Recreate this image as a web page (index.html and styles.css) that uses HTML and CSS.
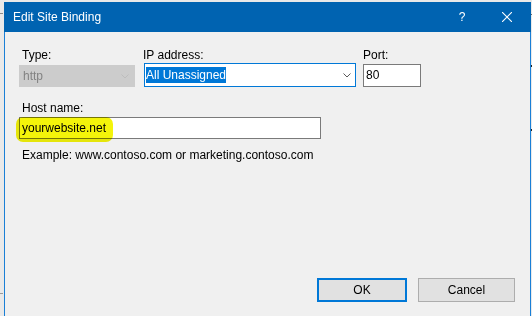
FILE: index.html
```html
<!DOCTYPE html>
<html>
<head>
<meta charset="utf-8">
<link rel="stylesheet" href="styles.css">
</head>
<body>
<div class="screen">
  <div class="edge edge-left">
    <span class="tick tick-a"></span>
    <span class="tick tick-b"></span>
  </div>
  <div class="dialog">
    <div class="titlebar">
      <span class="title">Edit Site Binding</span>
      <span class="help">?</span>
      <svg class="close" width="10" height="10" viewBox="0 0 10 10"><path d="M0 0L10 10M10 0L0 10" stroke="#fff" stroke-width="1.1" fill="none"/></svg>
    </div>
    <div class="content">
      <div class="fields">
        <div class="field field-type">
          <label class="lbl lbl-type">Type:</label>
          <div class="select select-disabled">
            <span>http</span>
            <svg class="chev" width="8" height="5" viewBox="0 0 8 5"><path d="M0.5 0.5L4 4L7.5 0.5" stroke="#bdbdbd" stroke-width="1" fill="none"/></svg>
          </div>
        </div>
        <div class="field field-ip">
          <label class="lbl lbl-ip">IP address:</label>
          <div class="select select-focus">
            <span class="sel-text">All Unassigned</span>
            <svg class="chev" width="8" height="5" viewBox="0 0 8 5"><path d="M0.5 0.5L4 4L7.5 0.5" stroke="#5a5a5a" stroke-width="1" fill="none"/></svg>
          </div>
        </div>
        <div class="field field-port">
          <label class="lbl lbl-port">Port:</label>
          <div class="textbox port-box">80</div>
        </div>
      </div>
      <div class="host">
        <label class="lbl lbl-host">Host name:</label>
        <div class="textbox host-box">
          <span class="host-text">yourwebsite.net</span>
          <span class="marker"></span>
        </div>
      </div>
      <p class="example">Example: www.contoso.com or marketing.contoso.com</p>
      <div class="buttons">
        <button class="btn btn-ok">OK</button>
        <button class="btn btn-cancel">Cancel</button>
      </div>
    </div>
  </div>
  <div class="edge edge-right">
    <span class="tick tick-c"></span>
    <span class="tick tick-d"></span>
    <span class="tick tick-e"></span>
  </div>
</div>
</body>
</html>
```
FILE: styles.css
```css
html, body {
  margin: 0;
  padding: 0;
}
body {
  font-family: "Liberation Sans", Arial, sans-serif;
  font-size: 12px;
  color: #000;
  background: #e9e9e9;
}
.screen {
  display: flex;
  width: 532px;
  height: 316px;
  overflow: hidden;
  background: #e9e9e9;
}
.edge {
  display: flex;
  flex-direction: column;
}
.edge-left {
  width: 4px;
}
.edge-right {
  width: 1px;
}
.tick {
  display: block;
  height: 1px;
  background: #8a8a8a;
}
.tick-a { margin-top: 13px; width: 3px; }
.tick-b { margin-top: 279px; width: 3px; background: #9a9a9a; }
.tick-c { margin-top: 14px; background: #6a6a6a; }
.tick-d { margin-top: 50px; height: 2px; background: #222; }
.tick-e { margin-top: 62px; height: 2px; background: #222; }

.dialog {
  width: 527px;
  margin-top: 2px;
  display: flex;
  flex-direction: column;
  background: #f0f0f0;
}
.titlebar {
  height: 30px;
  line-height: 30px;
  background: #0063b1;
  color: #fff;
  display: flex;
  align-items: center;
}
.title {
  flex: 1;
  padding-left: 9px;
}
.help {
  width: 8px;
  text-align: center;
  margin-right: 36px;
}
.close {
  display: block;
  margin-right: 19px;
}
.content {
  flex: 1;
  border-left: 1px solid #1a7fd6;
  border-right: 1px solid #1a7fd6;
  padding: 16px 15px 14px 14px;
  display: flex;
  flex-direction: column;
}
.fields {
  display: flex;
}
.field {
  display: flex;
  flex-direction: column;
  height: 39px;
}
.field-type { width: 116px; }
.field-ip { width: 212px; margin-left: 9px; }
.field-port { width: 58px; margin-left: 7px; }
.lbl {
  display: block;
  line-height: 15px;
  height: 15px;
}
.lbl-type { padding-left: 3px; }
.lbl-ip { margin-left: -1px; }
.lbl-port { padding-left: 0; }
.select {
  margin-top: auto;
  box-sizing: border-box;
  display: flex;
  align-items: center;
  justify-content: space-between;
}
.select-disabled {
  height: 22px;
  background: #cccccc;
  border: 1px solid #cccccc;
  color: #838383;
  padding: 0 5px 0 3px;
}
.select-focus {
  height: 24px;
  background: #fff;
  border: 1px solid #0078d7;
  padding: 0 4px 0 1px;
}
.sel-text {
  background: #0078d7;
  color: #fff;
  height: 16px;
  line-height: 16px;
}
.chev {
  display: block;
}
.textbox {
  box-sizing: border-box;
  background: #fff;
  border: 1px solid #7a7a7a;
}
.port-box {
  margin-top: auto;
  height: 23px;
  line-height: 21px;
  padding-left: 2px;
}
.host {
  margin-top: 14px;
}
.lbl-host {
  padding-left: 3px;
}
.host-box {
  position: relative;
  margin-top: 1px;
  width: 302px;
  height: 22px;
  line-height: 20px;
  padding-left: 2px;
}
.host-text {
  position: relative;
}
.marker {
  position: absolute;
  left: -4px;
  top: -1px;
  width: 97px;
  height: 25px;
  background: #f4f40a;
  border-radius: 7px;
  mix-blend-mode: multiply;
}
.example {
  margin: 9px 0 0 0;
  line-height: 15px;
  padding-left: 3px;
}
.buttons {
  margin-top: auto;
  display: flex;
  justify-content: flex-end;
  gap: 11px;
}
.btn {
  box-sizing: border-box;
  height: 24px;
  background: #e1e1e1;
  font-family: "Liberation Sans", Arial, sans-serif;
  font-size: 12px;
  color: #000;
  padding: 0;
  margin: 0;
}
.btn-ok {
  width: 90px;
  border: 2px solid #0078d7;
}
.btn-cancel {
  width: 97px;
  border: 1px solid #adadad;
}
```
